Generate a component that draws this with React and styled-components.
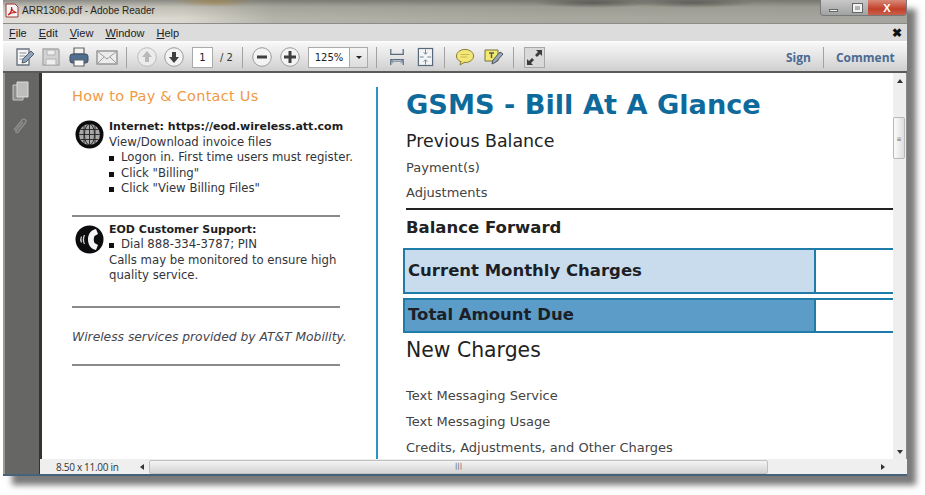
import React from "react";
import styled, { createGlobalStyle } from "styled-components";

const GlobalStyle = createGlobalStyle`
  html, body {
    margin: 0;
    padding: 0;
    background: #fff;
    font-family: "DejaVu Sans", sans-serif;
  }
`;

const Page = styled.div`
  width: 925px;
  height: 495px;
  padding: 0 0 0 3px;
  box-sizing: border-box;
  overflow: hidden;
  background: #fff;
`;

const Window = styled.div`
  width: 904px;
  height: 476px;
  display: flex;
  flex-direction: column;
  background: #9a9a94;
  box-shadow: 9px 9px 6px rgba(70, 70, 70, 0.72);
  border-bottom: 2px solid #46627a;
  box-sizing: border-box;
`;

const TitleBar = styled.div`
  height: 23px;
  flex: none;
  display: flex;
  align-items: flex-start;
  justify-content: space-between;
  background:
    radial-gradient(ellipse 60px 5px at 590px 3px, rgba(60, 60, 55, 0.55), transparent),
    radial-gradient(ellipse 60px 5px at 690px 3px, rgba(60, 60, 55, 0.5), transparent),
    radial-gradient(ellipse 40px 5px at 210px 2px, rgba(170, 130, 50, 0.5), transparent),
    linear-gradient(180deg, rgba(85, 85, 80, 0.6) 0, rgba(130, 130, 120, 0.3) 30%, rgba(150, 150, 145, 0) 80%),
    linear-gradient(90deg, #e0ded7 0, #d9d7ce 20%, #b4b3a9 30%, #a8a89f 60%, #a5a59d 100%);
`;

const TitleLeft = styled.div`
  display: flex;
  align-items: center;
  gap: 3px;
  height: 21px;
  padding-left: 2px;
  font: 10px "Liberation Sans", sans-serif;
  color: #26261f;
`;

const Controls = styled.div`
  display: flex;
  height: 15px;
  border: 1px solid #77777a;
  border-top: 0;
  border-radius: 0 0 4px 4px;
  overflow: hidden;
`;

const Control = styled.div`
  width: ${(p) => p.$w}px;
  display: flex;
  align-items: center;
  justify-content: center;
  color: #fff;
  font: bold 11px "Liberation Sans", sans-serif;
  background: ${(p) =>
    p.$close
      ? "linear-gradient(180deg, #d98a78, #c2402a 60%, #c8614d)"
      : "linear-gradient(180deg, #c8c8c8, #a0a2a2)"};
`;

const MinBar = styled.span`
  width: 9px;
  height: 3px;
  margin-top: 5px;
  background: #f0f0f0;
  border: 1px solid #666;
  box-sizing: border-box;
`;

const MaxBox = styled.span`
  width: 9px;
  height: 8px;
  border: 2px solid #f2f2f2;
  outline: 1px solid #666;
  box-sizing: border-box;
`;

const MenuBar = styled.div`
  height: 18px;
  flex: none;
  display: flex;
  align-items: center;
  justify-content: space-between;
  padding: 0 5px 0 6px;
  background: #dcdcdc;
  border-top: 1px solid #8c8c88;
  box-sizing: border-box;
  font: 11px "Liberation Sans", sans-serif;
  color: #222;
`;

const MenuItems = styled.div`
  display: flex;
  gap: 12px;

  u {
    text-underline-offset: 1px;
  }
`;

const MenuClose = styled.span`
  font-size: 12px;
  font-weight: bold;
  color: #111;
`;

const Toolbar = styled.div`
  height: 32px;
  flex: none;
  display: flex;
  align-items: center;
  padding-left: 12px;
  background: linear-gradient(180deg, #f6f6f6 0, #e6e6e6 45%, #cfcfcf 100%);
  border-top: 2px solid #fbfbfb;
  border-bottom: 2px solid #5a5a5a;
  box-sizing: border-box;
`;

const ToolIcon = styled.svg`
  flex: none;
  width: ${(p) => p.$w || 20}px;
  height: 22px;
  margin-left: ${(p) => p.$ml || 0}px;
`;

const Sep = styled.span`
  flex: none;
  width: 1px;
  height: 21px;
  margin-left: ${(p) => p.$ml}px;
  background: #a2a2a2;
`;

const PageInput = styled.div`
  flex: none;
  width: 21px;
  height: 21px;
  margin-left: 8px;
  display: flex;
  align-items: center;
  justify-content: center;
  background: #fff;
  border: 1px solid #aaa;
  box-sizing: border-box;
  font-size: 10px;
  color: #222;
`;

const PageTotal = styled.span`
  flex: none;
  width: 22px;
  margin-left: 7px;
  font-size: 10px;
  color: #333;
`;

const ZoomBox = styled.div`
  flex: none;
  width: 60px;
  height: 21px;
  margin-left: 8px;
  display: flex;
  background: #fff;
  border: 1px solid #aaa;
  box-sizing: border-box;
  font-size: 10px;
  color: #222;
`;

const ZoomValue = styled.span`
  width: 40px;
  display: flex;
  align-items: center;
  justify-content: center;
`;

const ZoomArrow = styled.span`
  flex: 1;
  display: flex;
  align-items: center;
  justify-content: center;
  background: linear-gradient(180deg, #f4f4f4, #dcdcdc);
  border-left: 1px solid #aaa;

  &::after {
    content: "";
    border: 3px solid transparent;
    border-top: 3px solid #222;
    margin-top: 3px;
  }
`;

const ExpandButton = styled.div`
  flex: none;
  width: 21px;
  height: 21px;
  margin-left: 10px;
  display: flex;
  align-items: center;
  justify-content: center;
  background: #d9d9d9;
  border: 1px solid #a8a8a8;
  box-sizing: border-box;
`;

const ToolLink = styled.span`
  flex: none;
  font: bold 12px "Open Sans", sans-serif;
  color: #4b6a92;
  margin-left: ${(p) => p.$ml}px;
`;

const Body = styled.div`
  flex: 1;
  min-height: 0;
  display: flex;
`;

const Rail = styled.div`
  flex: none;
  width: 37px;
  margin-left: 2px;
  display: flex;
  flex-direction: column;
  align-items: center;
  gap: 15px;
  padding: 8px 4px 0 0;
  box-sizing: border-box;
  background: #666664;
  border-right: 3px solid #333;
`;

const Viewer = styled.div`
  flex: 1;
  min-width: 0;
  display: grid;
  grid-template-columns: 1fr 14px;
  grid-template-rows: 1fr 15px;
`;

const Sheet = styled.div`
  display: grid;
  grid-template-columns: 336px 1fr;
  background: #fff;
  overflow: hidden;
  min-height: 0;
`;

const LeftCol = styled.div`
  margin-top: 14px;
  padding-left: 30px;
  border-right: 2px solid #2a94c8;
  box-sizing: border-box;
`;

const LeftHead = styled.h2`
  margin: 0;
  font-size: 14.5px;
  line-height: 18px;
  font-weight: 400;
  color: #ef9a45;
  letter-spacing: 0.25px;
`;

const InfoBlock = styled.div`
  display: flex;
  gap: 5px;
  margin: ${(p) => p.$mt}px 0 0 3px;
`;

const RoundIcon = styled.svg`
  flex: none;
  width: 29px;
  height: 29px;
  margin-top: ${(p) => p.$mt}px;
`;

const InfoText = styled.div`
  font-size: 11.7px;
  line-height: 15.5px;
  white-space: nowrap;
  color: #33343a;
`;

const InfoTitle = styled.div`
  font-size: 11px;
  font-weight: bold;
  color: #1d1d22;
`;

const Bullet = styled.div`
  display: flex;
  align-items: center;
  gap: 7px;

  &::before {
    content: "";
    width: 5px;
    height: 5px;
    margin-top: 2px;
    background: #111;
  }
`;

const Rule = styled.div`
  width: 268px;
  height: 2px;
  background: #8a8a8a;
  margin-top: ${(p) => p.$mt}px;
`;

const Italic = styled.div`
  margin-top: 21px;
  font-size: 12.3px;
  line-height: 16px;
  font-style: italic;
  white-space: nowrap;
  color: #44454f;
`;

const RightCol = styled.div`
  padding: 16px 0 0 28px;
`;

const MainTitle = styled.h1`
  margin: 0;
  font-size: 27.2px;
  line-height: 32px;
  font-weight: bold;
  color: #0f6a9c;
`;

const Heading = styled.div`
  margin-top: ${(p) => p.$mt}px;
  font-size: ${(p) => p.$size}px;
  line-height: 20px;
  font-weight: ${(p) => (p.$bold ? "bold" : 400)};
  color: #222;
`;

const LineItem = styled.div`
  margin-top: ${(p) => p.$mt}px;
  font-size: 13px;
  line-height: 16px;
  color: #444;
`;

const BlackRule = styled.div`
  height: 2px;
  margin-top: 7px;
  background: #222;
`;

const AmountRow = styled.div`
  display: grid;
  grid-template-columns: 413px 1fr;
  height: ${(p) => p.$h}px;
  margin: ${(p) => p.$mt}px 0 0 -3px;
  border-top: 2px solid #1f7ba8;
  border-bottom: 2px solid #1f7ba8;
  box-sizing: border-box;
`;

const AmountLabel = styled.div`
  display: flex;
  align-items: center;
  padding: 0 0 ${(p) => p.$pb}px 3px;
  background: ${(p) => p.$fill};
  border-left: 2px solid #1f7ba8;
  border-right: 2px solid #1f7ba8;
  font-size: 16.5px;
  font-weight: bold;
  color: #1c1f26;
`;

const Scroll = styled.div`
  display: flex;
  flex-direction: column;
  align-items: center;
  justify-content: space-between;
  padding: 6px 0 5px;
  background: #eeeeee;
  border-right: 1px solid #8b8b8b;
  box-sizing: border-box;
  position: relative;
`;

const ThumbV = styled.div`
  position: absolute;
  top: 44px;
  left: 0;
  width: 12px;
  height: 42px;
  background: linear-gradient(90deg, #fbfbfb, #dedede);
  border: 1px solid #b8b8b8;
  border-radius: 2px;
  box-sizing: border-box;
  display: flex;
  align-items: center;
  justify-content: center;
  font-size: 6px;
  color: #666;
`;

const Arrow = styled.span`
  display: block;
  flex: none;
  width: 0;
  height: 0;
  margin-left: ${(p) => p.$ml || 0}px;
  border: 3px solid transparent;
  ${(p) => p.$dir === "up" && "border-bottom: 4px solid #333; border-top: 0;"}
  ${(p) => p.$dir === "down" && "border-top: 4px solid #333; border-bottom: 0;"}
  ${(p) => p.$dir === "left" && "border-right: 4px solid #333; border-left: 0;"}
  ${(p) => p.$dir === "right" && "border-left: 4px solid #333; border-right: 0;"}
`;

const StatusBar = styled.div`
  grid-column: 1 / 3;
  display: flex;
  align-items: center;
  margin-left: -2px;
  background: #efefef;
  box-sizing: border-box;
`;

const PageSize = styled.span`
  width: 100px;
  padding-left: 16px;
  box-sizing: border-box;
  font: 10px "Open Sans", sans-serif;
  letter-spacing: -0.3px;
  color: #333;
`;

const ThumbH = styled.div`
  width: 619px;
  height: 14px;
  margin-left: 5px;
  background: linear-gradient(180deg, #f4f4f4, #d4d4d4);
  border: 1px solid #c0c0c0;
  border-radius: 2px;
  box-sizing: border-box;
  display: flex;
  align-items: center;
  justify-content: center;
  font-size: 7px;
  line-height: 1;
  color: #555;
`;

const DocEditIcon = () => (
  <ToolIcon viewBox="0 0 20 22">
    <path d="M2 3h12v16H2z" fill="#f6f6f6" stroke="#6c7480" strokeWidth="1.4" />
    <path d="M4.5 7h7M4.5 10h6M4.5 13h4" stroke="#8a8f96" />
    <path d="M7 17l1-4 8-8 3 3-8 8z" fill="#8ea4bd" stroke="#555c66" />
  </ToolIcon>
);

const SaveIcon = () => (
  <ToolIcon viewBox="0 0 20 22" $ml={6}>
    <path d="M2 3h15l1 1v15H2z" fill="#d3d3d3" stroke="#a9a9a9" strokeWidth="1.4" />
    <path d="M6 4h8v5H6zM5 13h10v6H5z" fill="#eeeeee" stroke="#b2b2b2" />
  </ToolIcon>
);

const PrintIcon = () => (
  <ToolIcon viewBox="0 0 20 22" $ml={8}>
    <path d="M5 2h10v6H5z" fill="#f2f2f2" stroke="#666" strokeWidth="1.2" />
    <rect x="1" y="8" width="18" height="9" rx="2.5" fill="#4f6f91" stroke="#3c4a58" />
    <path d="M5 14h10v6H5z" fill="#fafafa" stroke="#666" strokeWidth="1.2" />
  </ToolIcon>
);

const MailIcon = () => (
  <ToolIcon viewBox="0 0 22 22" $w={22} $ml={7}>
    <rect x="1" y="5" width="20" height="13" fill="#ececec" stroke="#8d8d8d" strokeWidth="1.3" />
    <path d="M1 5l10 8 10-8M1 18l7-7M21 18l-7-7" fill="none" stroke="#9e9e9e" />
  </ToolIcon>
);

const RoundTool = ({ ml, children, dim }) => (
  <ToolIcon viewBox="0 0 20 22" $ml={ml}>
    <circle cx="10" cy="11" r="9.3" fill={dim ? "#ececec" : "#f3f3f3"} stroke={dim ? "#bbb" : "#9b9b9b"} />
    <g fill={dim ? "#b9b9b9" : "#3f3f3f"}>{children}</g>
  </ToolIcon>
);

const FitWidthIcon = () => (
  <ToolIcon viewBox="0 0 18 22" $w={16} $ml={12}>
    <path d="M2 2v6h14V2M2 20v-6h14v6" fill="none" stroke="#5a6a7c" strokeWidth="1.4" />
    <path d="M2 16h14M2 16l3-2M2 16l3 2M16 16l-3-2M16 16l-3 2" fill="none" stroke="#7c8fa5" />
  </ToolIcon>
);

const FitPageIcon = () => (
  <ToolIcon viewBox="0 0 18 22" $w={17} $ml={12}>
    <rect x="1.5" y="2" width="15" height="18" fill="#f4f4f4" stroke="#5a6a7c" strokeWidth="1.3" />
    <path d="M9 3v5M9 19v-5M3 11h4M15 11h-4M7 6l2 2 2-2M7 16l2-2 2 2" fill="none" stroke="#6b8098" />
  </ToolIcon>
);

const BubbleIcon = () => (
  <ToolIcon viewBox="0 0 20 22" $ml={10}>
    <ellipse cx="10" cy="10" rx="8.6" ry="6.6" fill="#f3e77a" stroke="#8a8031" />
    <path d="M6 15l-1 4 5-3" fill="#f3e77a" stroke="#8a8031" />
    <path d="M5.5 8.5h9M5.5 11h7" stroke="#c9b94e" />
  </ToolIcon>
);

const StickyIcon = () => (
  <ToolIcon viewBox="0 0 20 22" $ml={9}>
    <path d="M1 4h13v11H1z" fill="#f2e96f" stroke="#77733a" />
    <path d="M5 7h5M7.5 7v5" stroke="#555" strokeWidth="1.4" />
    <path d="M8 18l1-4 7-8 3 2-7 8z" fill="#9aa7b6" stroke="#4c5560" />
  </ToolIcon>
);

const ExpandIcon = () => (
  <svg width="17" height="17" viewBox="0 0 17 17">
    <path d="M16 1h-6l2 2-3 3 2 2 3-3 2 2zM1 16h6l-2-2 3-3-2-2-3 3-2-2z" fill="#3a3a3a" />
  </svg>
);

const PdfIcon = () => (
  <svg width="14" height="15" viewBox="0 0 14 15">
    <path d="M1 1h9l3 3v10H1z" fill="#f4f4f4" stroke="#9c3a36" />
    <path d="M3 12c3-2 4-5 3.5-8 0 3 2 5 5 5.5-3-.2-6 .5-8.500 2.500z" fill="none" stroke="#c4221c" strokeWidth="1.2" />
  </svg>
);

const PagesIcon = () => (
  <svg width="17" height="20" viewBox="0 0 17 20">
    <path d="M1 4h10v15H1z" fill="#8e8e8c" stroke="#c8c8c6" />
    <path d="M5 1h11v15H5z" fill="#bdbdbb" stroke="#dcdcda" />
  </svg>
);

const ClipIcon = () => (
  <svg width="18" height="22" viewBox="0 0 18 22">
    <path
      d="M3 14L11 4c2-2 5 0 3.500 2.500L7 16c-1 1.500-3 0-2-1.500l7-8.500"
      fill="none"
      stroke="#8e8e8c"
      strokeWidth="1.4"
    />
  </svg>
);

const GlobeIcon = () => (
  <RoundIcon viewBox="0 0 29 29" $mt={1}>
    <circle cx="14.5" cy="14.5" r="14" fill="#0c0c0e" />
    <circle cx="14.5" cy="14.5" r="10.500" fill="#a8a8a8" />
    <g fill="none" stroke="#222" strokeWidth="0.9">
      <ellipse cx="14.5" cy="14.500" rx="5" ry="10.500" />
      <path d="M14.500 4v21M4 14.500h21M5.500 9.500h18M5.500 19.500h18M9 5.500v18M20 5.500v18" />
    </g>
  </RoundIcon>
);

const PhoneIcon = () => (
  <RoundIcon viewBox="0 0 29 29" $mt={3}>
    <circle cx="14.500" cy="14.500" r="14" fill="#0c0c0e" />
    <path d="M21 4c-5 1-8 5-8 10.500S16 24 21 25l2-5-3.500-2c-1-2-1-5 0-7L23 9z" fill="#f4f4f4" />
    <path d="M9.500 10c-1.500 3-1.500 6 0 9M6.500 11.500c-1 2-1 4 0 6" fill="none" stroke="#d8d8d8" strokeWidth="1.2" />
  </RoundIcon>
);

export default function App() {
  return (
    <>
      <GlobalStyle />
      <Page>
        <Window>
          <TitleBar>
            <TitleLeft>
              <PdfIcon />
              ARR1306.pdf - Adobe Reader
            </TitleLeft>
            <Controls>
              <Control $w={25}><MinBar /></Control>
              <Control $w={22}><MaxBox /></Control>
              <Control $w={38} $close>X</Control>
            </Controls>
          </TitleBar>
          <MenuBar>
            <MenuItems>
              <span><u>F</u>ile</span>
              <span><u>E</u>dit</span>
              <span><u>V</u>iew</span>
              <span><u>W</u>indow</span>
              <span><u>H</u>elp</span>
            </MenuItems>
            <MenuClose>✖</MenuClose>
          </MenuBar>
          <Toolbar>
            <DocEditIcon />
            <SaveIcon />
            <PrintIcon />
            <MailIcon />
            <Sep $ml={8} />
            <RoundTool ml={10} dim>
              <path d="M10 5l5 6h-3v5H8v-5H5z" />
            </RoundTool>
            <RoundTool ml={7}>
              <path d="M10 17l-5-6h3V6h4v5h3z" />
            </RoundTool>
            <PageInput>1</PageInput>
            <PageTotal>/ 2</PageTotal>
            <Sep $ml={0} />
            <RoundTool ml={9}>
              <rect x="5" y="9.500" width="10" height="3" />
            </RoundTool>
            <RoundTool ml={8}>
              <path d="M8.500 5h3v4.500H16v3h-4.500V17h-3v-4.500H4v-3h4.500z" />
            </RoundTool>
            <ZoomBox>
              <ZoomValue>125%</ZoomValue>
              <ZoomArrow />
            </ZoomBox>
            <Sep $ml={8} />
            <FitWidthIcon />
            <FitPageIcon />
            <Sep $ml={10} />
            <BubbleIcon />
            <StickyIcon />
            <Sep $ml={9} />
            <ExpandButton><ExpandIcon /></ExpandButton>
            <ToolLink $ml={241}>Sign</ToolLink>
            <Sep $ml={12} />
            <ToolLink $ml={12}>Comment</ToolLink>
          </Toolbar>
          <Body>
            <Rail>
              <PagesIcon />
              <ClipIcon />
            </Rail>
            <Viewer>
              <Sheet>
                <LeftCol>
                  <LeftHead>How to Pay &amp; Contact Us</LeftHead>
                  <InfoBlock $mt={14}>
                    <GlobeIcon />
                    <InfoText>
                      <InfoTitle>Internet: https://eod.wireless.att.com</InfoTitle>
                      <div>View/Download invoice files</div>
                      <Bullet>Logon in. First time users must register.</Bullet>
                      <Bullet>Click "Billing"</Bullet>
                      <Bullet>Click "View Billing Files"</Bullet>
                    </InfoText>
                  </InfoBlock>
                  <Rule $mt={18} />
                  <InfoBlock $mt={5}>
                    <PhoneIcon />
                    <InfoText>
                      <InfoTitle>EOD Customer Support:</InfoTitle>
                      <Bullet>Dial 888-334-3787; PIN</Bullet>
                      <div>Calls may be monitored to ensure high</div>
                      <div>quality service.</div>
                    </InfoText>
                  </InfoBlock>
                  <Rule $mt={22} />
                  <Italic>Wireless services provided by AT&amp;T Mobility.</Italic>
                  <Rule $mt={19} />
                </LeftCol>
                <RightCol>
                  <MainTitle>GSMS - Bill At A Glance</MainTitle>
                  <Heading $mt={10} $size={17.4}>Previous Balance</Heading>
                  <LineItem $mt={9}>Payment(s)</LineItem>
                  <LineItem $mt={9}>Adjustments</LineItem>
                  <BlackRule />
                  <Heading $mt={8} $size={16.5} $bold>Balance Forward</Heading>
                  <AmountRow $h={46} $mt={10}>
                    <AmountLabel $fill="#c9dcee" $pb={2}>Current Monthly Charges</AmountLabel>
                    <div />
                  </AmountRow>
                  <AmountRow $h={35} $mt={4}>
                    <AmountLabel $fill="#5c9cc9" $pb={3}>Total Amount Due</AmountLabel>
                    <div />
                  </AmountRow>
                  <Heading $mt={7} $size={20.4}>New Charges</Heading>
                  <LineItem $mt={28}>Text Messaging Service</LineItem>
                  <LineItem $mt={10}>Text Messaging Usage</LineItem>
                  <LineItem $mt={10}>Credits, Adjustments, and Other Charges</LineItem>
                </RightCol>
              </Sheet>
              <Scroll>
                <Arrow $dir="up" />
                <ThumbV>≡</ThumbV>
                <Arrow $dir="down" />
              </Scroll>
              <StatusBar>
                <PageSize>8.50 x 11.00 in</PageSize>
                <Arrow $dir="left" />
                <ThumbH>|||</ThumbH>
                <Arrow $dir="right" $ml={113} />
              </StatusBar>
            </Viewer>
          </Body>
        </Window>
      </Page>
    </>
  );
}
